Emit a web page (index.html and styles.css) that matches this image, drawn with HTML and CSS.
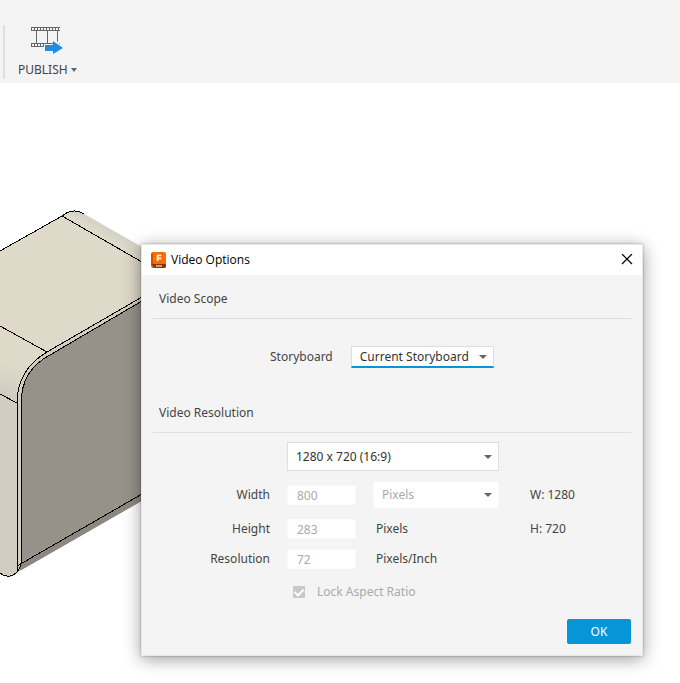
FILE: index.html
```
<!DOCTYPE html>
<html lang="en">
<head>
<meta charset="utf-8">
<title>Video Options</title>
<link rel="stylesheet" href="styles.css">
</head>
<body>
<header class="toolbar">
  <button class="publish" type="button">
    <svg class="publish-icon" width="34" height="30" viewBox="0 0 34 30" aria-hidden="true">
      <path d="M1 2h29v4H1zM1 18h29v4H1z" fill="#666"/>
      <path d="M2 4h28M2 20h28" stroke="#f4f4f4" stroke-width="2" stroke-dasharray="2 1"/>
      <path d="M6.500 6v12M17.500 6v12M27.500 6v12" stroke="#666" fill="none"/>
      <path d="M14 19h9v-4l2-1 9 9-8 6h-3v-4h-9z" fill="#f4f4f4"/>
      <path d="M15 20h8v-4l10 7-10 6v-3h-8z" fill="#1b8ee2"/>
    </svg>
    <span class="publish-label">PUBLISH<span class="caret"></span></span>
  </button>
</header>
<main class="canvas">
  <svg class="model" width="170" height="400" viewBox="0 200 170 400" aria-hidden="true">
    <defs>
      <linearGradient id="top" x1="0" x2="1"><stop offset=".7" stop-color="#dfd9c9"/><stop offset="1" stop-color="#d3cec0"/></linearGradient>
      <linearGradient id="bend" gradientUnits="userSpaceOnUse" x1="20" y1="335" x2="0" y2="394"><stop offset="0" stop-color="#dfd8c9"/><stop offset=".5" stop-color="#dedaca"/><stop offset="1" stop-color="#cfcdc0"/></linearGradient>
      <linearGradient id="far" gradientUnits="userSpaceOnUse" x1="100" y1="238" x2="107" y2="226"><stop offset="0" stop-color="#deddcd"/><stop offset="1" stop-color="#d3d0c4"/></linearGradient>
    </defs>
    <path d="M0 251 62 216Q73 207 84 214L170 263V554L20 571Q14 577 9 577 4 577 0 573z" fill="#d1cec1"/>
    <path d="M0 251 62 216 142 262 170 278V282L47 352 0 326z" fill="url(#top)"/>
    <path d="M62 216Q73 207 84 214L142 248 170 264V278L142 262z" fill="url(#far)"/>
    <path d="M0 326 47 352Q17 370 17 403L0 394z" fill="url(#bend)"/>
    <path d="M142 301 50 355Q21 370 21 404V563L142 494 170 478V285z" fill="#96928a"/>
    <path d="M20 564 142 494 170 478V600H142V501L20 571z" fill="#8d8781"/>
    <path d="M142 501 170 485V600H0V573Q4 577 9 577 14 577 20 571z" fill="#fff"/>
    <g class="edges">
      <path d="M0 251 62 216Q73 207 84 214M62 216 142 262M0 326 47 352M0 394 17 403"/>
      <path d="M142 297 47 352Q17 370 17 403V572M142 301 50 355Q21 370 21 404V564Q20 569 16 573 12 577 7 576 3 576 0 573M17 566 142 494"/>
    </g>
  </svg>
  <form class="dialog" role="dialog" aria-labelledby="dialog-title">
    <div class="titlebar">
      <svg width="15" height="16" viewBox="0 0 15 16" aria-hidden="true">
        <rect width="15" height="16" rx="2" fill="#ff6b00"/>
        <path d="M0 2v11l2 3V1z" fill="#d75200"/>
        <path d="M1 12h14v2q0 2-2 2H3z" fill="#8b3500"/>
        <path d="M6 9V3h4v1H7v2h3v1H7v2z" fill="#fff" stroke="#fff" stroke-width=".6"/>
        <path d="M5 14h6" stroke="#d9b39b" stroke-width="2" stroke-dasharray="1.700 .4"/>
      </svg>
      <h1 id="dialog-title">Video Options</h1>
      <button class="close" type="button" aria-label="Close">
        <svg width="12" height="12" viewBox="0 0 12 12" aria-hidden="true"><path d="M1 0 11 10M11 0 1 10" stroke="#000" stroke-width="1.200"/></svg>
      </button>
    </div>
    <div class="content">
      <h2>Video Scope</h2>
      <div class="scope">
        <label for="storyboard">Storyboard</label>
        <span class="select active"><select id="storyboard"><option>Current Storyboard</option></select></span>
      </div>
      <h2>Video Resolution</h2>
      <div class="settings">
        <span class="select preset"><select aria-label="Video resolution"><option>1280 x 720 (16:9)</option></select></span>
        <label for="width">Width</label>
        <input class="number" id="width" type="text" value="800" disabled>
        <span class="select units"><select aria-label="Units" disabled><option>Pixels</option></select></span>
        <output>W: 1280</output>
        <label for="height">Height</label>
        <input class="number" id="height" type="text" value="283" disabled>
        <span class="unit">Pixels</span>
        <output>H: 720</output>
        <label for="resolution">Resolution</label>
        <input class="number" id="resolution" type="text" value="72" disabled>
        <span class="unit">Pixels/Inch</span>
      </div>
      <div class="lock">
        <input id="lock" type="checkbox" checked disabled>
        <label for="lock">Lock Aspect Ratio</label>
      </div>
      <div class="actions"><button class="ok" type="submit">OK</button></div>
    </div>
  </form>
</main>
</body>
</html>
```
FILE: styles.css
```
* { box-sizing: border-box; }
body {
  display: flex;
  flex-direction: column;
  min-height: 100vh;
  margin: 0;
  background: #fff;
  color: #444;
  font: 12px/18px "Noto Sans", "Open Sans", sans-serif;
}
button, input, select { font: inherit; color: inherit; }
.toolbar {
  display: flex;
  padding: 25px 3px 4px;
  background: #f4f4f4;
}
.publish {
  display: flex;
  flex-direction: column;
  align-items: center;
  gap: 6px;
  padding: 0 0 0 13px;
  border: 0;
  border-left: 2px solid #dedede;
  background: none;
}
.publish-icon { display: block; }
.publish-label { display: flex; align-items: center; gap: 3px; }
.caret, .select::after {
  content: "";
  border: 4px solid transparent;
  border-top-color: #666;
  border-bottom: 0;
}
.caret { border-width: 4px 3px 0; }
.canvas { position: relative; flex: 1; }
.model { position: absolute; top: 117px; left: 0; }
.edges { fill: none; stroke: #000; stroke-width: 1; shape-rendering: crispEdges; }
.dialog {
  position: absolute;
  top: 161px;
  left: 141px;
  right: 37px;
  border: 1px solid #e8e8e8;
  background: #f4f4f4;
  box-shadow: 0 3px 16px rgba(0, 0, 0, .4), 0 0 2px rgba(0, 0, 0, .3);
}
.titlebar {
  display: flex;
  align-items: center;
  gap: 5px;
  height: 30px;
  padding: 0 9px;
  background: #fff;
}
h1, h2 { margin: 0; font-size: 12px; font-weight: 400; }
h1 { flex: 1; color: #000; font-family: "Open Sans", "Noto Sans", sans-serif; }
.close { display: flex; padding: 0; border: 0; background: none; }
.content { padding: 12px 11px 11px; }
h2 {
  height: 32px;
  padding: 3px 6px 0;
  border-bottom: 1px solid #dedede;
}
.scope {
  display: flex;
  align-items: center;
  gap: 18px;
  padding: 27px 0 33px 117px;
}
.select { position: relative; display: block; }
.select select {
  display: block;
  width: 100%;
  height: 100%;
  padding: 0 8px;
  border: 1px solid #dedede;
  border-radius: 0;
  appearance: none;
  background: #fff;
  color: #333;
  outline: 0;
}
.select::after { position: absolute; top: calc(50% - 2px); right: 7px; pointer-events: none; }
.active { width: 143px; height: 22px; }
.active select { border-bottom: 2px solid #0696d7; }
.settings {
  display: grid;
  grid-template-columns: 116px 69px 126px 1fr;
  grid-template-rows: 29px 28px 20px 20px;
  column-gap: 17px;
  row-gap: 10px;
  align-items: center;
  padding: 9px 0 0 1px;
}
.settings label { grid-column: 1; text-align: right; }
.preset { grid-column: 2 / 4; height: 29px; }
.units { height: 28px; }
.units select:disabled { border-color: #f8f8f8; color: #aaa; opacity: 1; }
.number {
  width: 100%;
  height: 20px;
  padding: 0 9px;
  border: 1px solid #fafafa;
  background: #fff;
  color: #aaa;
}
.unit { padding-left: 3px; }
.settings output { padding-left: 14px; }
.lock {
  display: flex;
  align-items: center;
  gap: 12px;
  padding: 14px 0 0 140px;
  color: #aaa;
}
.lock input {
  display: grid;
  place-items: center;
  width: 12px;
  height: 12px;
  margin: 0;
  appearance: none;
  background: #c8c8c8;
}
.lock input::after {
  content: "";
  width: 4px;
  height: 7px;
  margin-bottom: 2px;
  border: solid #fff;
  border-width: 0 2px 2px 0;
  transform: rotate(45deg);
}
.actions { display: flex; justify-content: flex-end; padding-top: 18px; }
.ok {
  width: 64px;
  height: 25px;
  padding: 0;
  border: 0;
  border-radius: 2px;
  background: #0696d7;
  color: #fff;
}
```
